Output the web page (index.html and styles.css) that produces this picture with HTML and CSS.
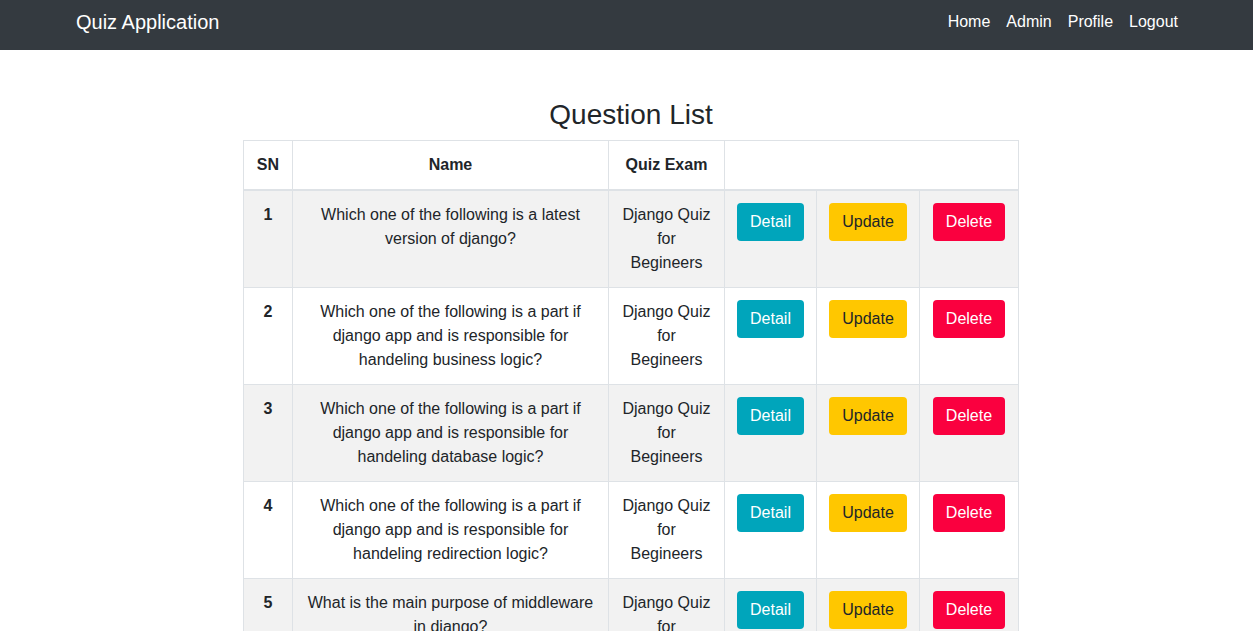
FILE: index.html
```html
<!DOCTYPE html>
<html lang="en">
<head>
<meta charset="utf-8">
<title>Quiz Application</title>
<link rel="stylesheet" href="styles.css">
</head>
<body>
<nav class="navbar">
  <div class="navbar-inner">
    <a class="brand" href="#">Quiz Application</a>
    <ul class="nav-links">
      <li><a href="#">Home</a></li>
      <li><a href="#">Admin</a></li>
      <li><a href="#">Profile</a></li>
      <li><a href="#">Logout</a></li>
    </ul>
  </div>
</nav>
<main class="container">
  <h3 class="page-title">Question List</h3>
  <table class="qtable">
    <colgroup>
      <col class="c-sn"><col class="c-name"><col class="c-exam"><col class="c-detail"><col class="c-update"><col class="c-delete">
    </colgroup>
    <thead>
      <tr><th>SN</th><th>Name</th><th>Quiz Exam</th><th colspan="3"></th></tr>
    </thead>
    <tbody>
      <tr>
        <th>1</th>
        <td>Which one of the following is a latest version of django?</td>
        <td>Django Quiz for Begineers</td>
        <td><a class="btn btn-info" href="#">Detail</a></td>
        <td><a class="btn btn-warning" href="#">Update</a></td>
        <td><a class="btn btn-danger" href="#">Delete</a></td>
      </tr>
      <tr>
        <th>2</th>
        <td>Which one of the following is a part if django app and is responsible for handeling business logic?</td>
        <td>Django Quiz for Begineers</td>
        <td><a class="btn btn-info" href="#">Detail</a></td>
        <td><a class="btn btn-warning" href="#">Update</a></td>
        <td><a class="btn btn-danger" href="#">Delete</a></td>
      </tr>
      <tr>
        <th>3</th>
        <td>Which one of the following is a part if django app and is responsible for handeling database logic?</td>
        <td>Django Quiz for Begineers</td>
        <td><a class="btn btn-info" href="#">Detail</a></td>
        <td><a class="btn btn-warning" href="#">Update</a></td>
        <td><a class="btn btn-danger" href="#">Delete</a></td>
      </tr>
      <tr>
        <th>4</th>
        <td>Which one of the following is a part if django app and is responsible for handeling redirection logic?</td>
        <td>Django Quiz for Begineers</td>
        <td><a class="btn btn-info" href="#">Detail</a></td>
        <td><a class="btn btn-warning" href="#">Update</a></td>
        <td><a class="btn btn-danger" href="#">Delete</a></td>
      </tr>
      <tr>
        <th>5</th>
        <td>What is the main purpose of middleware in django?</td>
        <td>Django Quiz for Begineers</td>
        <td><a class="btn btn-info" href="#">Detail</a></td>
        <td><a class="btn btn-warning" href="#">Update</a></td>
        <td><a class="btn btn-danger" href="#">Delete</a></td>
      </tr>
    </tbody>
  </table>
</main>
</body>
</html>
```
FILE: styles.css
```css
* { box-sizing: border-box; }
html, body {
  margin: 0;
  padding: 0;
}
body {
  font-family: "Liberation Sans", Arial, sans-serif;
  font-size: 16px;
  line-height: 1.5;
  color: #212529;
  background: #fff;
}
a { text-decoration: none; }

.navbar {
  background: #343a40;
  height: 50px;
  padding: 0 67px 6px 76px;
}
.navbar-inner {
  height: 44px;
  display: flex;
  align-items: center;
  justify-content: space-between;
}
.brand {
  color: #fff;
  font-size: 20px;
  line-height: 30px;
  white-space: nowrap;
}
.nav-links {
  list-style: none;
  margin: 0;
  padding: 0;
  display: flex;
}
.nav-links a {
  display: block;
  color: #fff;
  padding: 0 8px;
  line-height: 24px;
}

.container {
  padding: 0 67px 0 76px;
}
.page-title {
  margin: 48px 0 8px;
  font-size: 28px;
  font-weight: 400;
  line-height: 1.2;
  text-align: center;
}

.qtable {
  width: 775px;
  margin: 0 auto;
  border-collapse: collapse;
  table-layout: fixed;
  border: 1px solid #dee2e6;
}
.c-sn { width: 49px; }
.c-name { width: 316px; }
.c-exam { width: 116px; }
.c-detail { width: 92px; }
.c-update { width: 103px; }
.c-delete { width: 99px; }

.qtable th,
.qtable td {
  border: 1px solid #dee2e6;
  padding: 12px;
  text-align: center;
  vertical-align: top;
}
.qtable th { font-weight: 700; }
.qtable thead th {
  vertical-align: bottom;
  border-bottom: 2px solid #dee2e6;
}
.qtable tbody tr:nth-child(odd) { background: #f2f2f2; }

.btn {
  display: inline-block;
  padding: 6px 12px;
  font-size: 16px;
  line-height: 24px;
  border: 1px solid transparent;
  border-radius: 4px;
  white-space: nowrap;
}
.btn-info { background: #00a5bb; color: #fff; }
.btn-warning { background: #ffc700; color: #212529; }
.btn-danger { background: #fa003f; color: #fff; }
```
